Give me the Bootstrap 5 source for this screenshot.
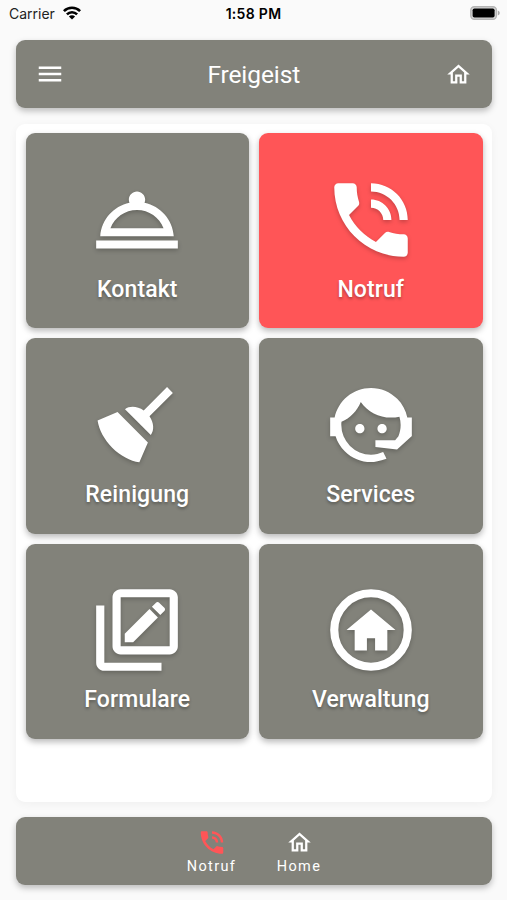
<!DOCTYPE html>
<html lang="de">
<head>
<meta charset="utf-8">
<meta name="viewport" content="width=device-width, initial-scale=1">
<title>Freigeist</title>
<link href="https://cdn.jsdelivr.net/npm/bootstrap@5.3.0/dist/css/bootstrap.min.css" rel="stylesheet">
<style>
  body { background: #fafafa; font-family: Roboto, "Liberation Sans", sans-serif; overflow: hidden; }
  .screen { height: 900px; padding: 0 15px 15px 15.5px; }
  .status { height: 40px; margin: 0 -8px 0 -6.5px; padding-bottom: 14px; font-family: Inter, sans-serif; font-size: 14px; color: #222; }
  .status .clock { font-weight: 600; color: #000; letter-spacing: .3px; margin-left: -2px; }
  .status .side { flex: 1 1 0; }
  .bar { height: 68px; background: #82827a; border-radius: 9px; color: #fff; box-shadow: 0 3px 6px rgba(0,0,0,.25); }
  .bar h1 { font-size: 24.5px; font-weight: 400; letter-spacing: -.1px; padding: 2px 2px 0 0; }
  .menu-icon { margin-left: 3px; }
  .panel { height: 678px; margin: 16px 0 15px; padding: 9px 9.5px 9px 10px; background: #fff; border-radius: 9px; box-shadow: 0 2px 8px rgba(0,0,0,.045); }
  .tiles { display: grid; grid-template-columns: 1fr 1fr; grid-auto-rows: 195.3px; gap: 10px; }
  .tile { background: #82827a; border-radius: 9px; color: #fff; text-decoration: none; padding-top: 37.5px; box-shadow: 0 3px 6px rgba(0,0,0,.28); }
  .tile.alarm { background: #ff5557; }
  .tile svg { width: 98px; height: 98px; filter: drop-shadow(0 2px 2px rgba(0,0,0,.22)); }
  .tile span { font-size: 23px; font-weight: 500; line-height: 30px; margin-top: 6px; letter-spacing: .1px; text-shadow: 0 2px 3px rgba(0,0,0,.3); }
  svg { fill: currentColor; display: block; flex: none; }
  .tab-strip { padding: 7px 0 0 3px; }
  .tab { color: #fff; text-decoration: none; font-size: 14.5px; line-height: 18px; letter-spacing: 1.35px; width: 87.5px; }
  .tab svg { height: 30px; }
  .hot { color: #ff5557; }
</style>
<script src="https://cdn.jsdelivr.net/npm/bootstrap@5.3.0/dist/js/bootstrap.bundle.min.js"></script>
</head>
<body>
<svg class="d-none" aria-hidden="true">
  <symbol id="home" viewBox="0 0 24 24"><path d="M12 5.69l5 4.5V18h-2v-6H9v6H7v-7.81l5-4.5M12 3L2 12h3v8h6v-6h2v6h6v-8h3L12 3z"/></symbol>
  <symbol id="phone" viewBox="0 0 24 24"><path d="M19 12h2c0-4.97-4.03-9-9-9v2c3.87 0 7 3.13 7 7zm-4 0h2c0-2.76-2.24-5-5-5v2c1.66 0 3 1.34 3 3zm5 3.5c-1.25 0-2.45-.2-3.57-.57-.35-.11-.74-.03-1.02.24l-2.2 2.2c-2.83-1.44-5.15-3.75-6.59-6.58l2.2-2.21c.28-.27.36-.66.25-1.01C8.7 6.45 8.5 5.25 8.5 4c0-.55-.45-1-1-1H4c-.55 0-1 .45-1 1 0 9.39 7.61 17 17 17 .55 0 1-.45 1-1v-3.5c0-.55-.45-1-1-1z"/></symbol>
</svg>
<div class="screen d-flex flex-column">
  <div class="status d-flex align-items-center">
    <div class="side d-flex align-items-center"><span>Carrier</span>
      <svg class="ms-2" width="18" height="14" viewBox="0 0 18 14"><g fill="none" stroke="#000" stroke-width="2.6"><path d="M.9 5.1a11.5 11.5 0 0 1 16.2 0M3.9 8.3a7.2 7.2 0 0 1 10.2 0"/></g><path d="M9 13.6 5.9 10.5a4.4 4.4 0 0 1 6.2 0z" fill="#000"/></svg>
    </div>
    <span class="clock">1:58 PM</span>
    <div class="side d-flex justify-content-end">
      <svg width="30" height="14" viewBox="0 0 30 14"><rect x=".8" y=".8" width="25.6" height="12.4" rx="3.5" fill="#d8d8d8" stroke="#b4b4b4" stroke-width="1.4"/><rect x="2.6" y="2.4" width="22" height="9.2" rx="1.8" fill="#000"/><path d="M27.8 4.6q2 .8 2 2.4t-2 2.4z" fill="#a9a9a9"/></svg>
    </div>
  </div>
  <header class="bar d-flex align-items-center justify-content-between px-3">
    <svg class="menu-icon" width="30" height="30" viewBox="0 0 24 24"><path d="M3 18h18v-2H3v2zm0-5h18v-2H3v2zm0-7v2h18V6H3z"/></svg>
    <h1 class="m-0">Freigeist</h1>
    <svg class="me-1" width="27" height="27"><use href="#home"/></svg>
  </header>
  <main class="panel">
    <div class="tiles">
      <a class="tile d-flex flex-column align-items-center" href="#"><svg viewBox="0 0 24 24"><path d="M2 17h20v2H2v-2zm11.84-9.21c.1-.24.16-.51.16-.79 0-1.1-.9-2-2-2s-2 .9-2 2c0 .28.06.55.16.79C6.25 8.6 3.27 11.93 3 16h18c-.27-4.07-3.25-7.4-7.16-8.21zM12 9.58c2.95 0 5.47 1.83 6.5 4.41h-13c1.03-2.58 3.55-4.41 6.5-4.41z"/></svg><span>Kontakt</span></a>
      <a class="tile alarm d-flex flex-column align-items-center" href="#"><svg><use href="#phone"/></svg><span>Notruf</span></a>
      <a class="tile d-flex flex-column align-items-center" href="#"><svg viewBox="0 0 24 24"><path d="M19.36,2.72L20.78,4.14L15.06,9.85C16.13,11.39 16.28,13.24 15.38,14.44L9.06,8.12C10.26,7.22 12.11,7.37 13.65,8.44L19.36,2.72M5.93,17.57C3.92,15.56 2.69,13.16 2.35,10.92L7.23,8.83L14.67,16.27L12.58,21.15C10.34,20.81 7.94,19.58 5.93,17.57Z"/></svg><span>Reinigung</span></a>
      <a class="tile d-flex flex-column align-items-center" href="#"><svg viewBox="0 0 24 24"><path d="M18.72,14.76C19.07,13.91 19.26,13 19.26,12C19.26,11.28 19.15,10.59 18.96,9.95C18.31,10.1 17.63,10.18 16.92,10.18C13.86,10.18 11.15,8.67 9.5,6.34C8.61,8.5 6.91,10.26 4.77,11.22C4.73,11.47 4.73,11.74 4.73,12A7.27,7.27 0 0,0 12,19.27C13.05,19.27 14.06,19.04 14.97,18.63C15.54,19.72 15.8,20.26 15.78,20.26C14.14,20.81 12.87,21.08 12,21.08C9.58,21.08 7.27,20.13 5.57,18.42C4.53,17.38 3.76,16.11 3.33,14.73H2V10.18H3.09C3.93,6.04 7.6,2.92 12,2.92C14.4,2.92 16.71,3.87 18.42,5.58C19.69,6.84 20.54,8.45 20.89,10.18H22V14.73H21.94L18.38,18L13.08,17.4V15.73H17.91L18.72,14.76M9.27,11.77C9.9,11.77 10.4,12.28 10.4,12.91C10.4,13.54 9.9,14.04 9.27,14.04C8.64,14.04 8.13,13.54 8.13,12.91C8.13,12.28 8.64,11.77 9.27,11.77M14.72,11.77C15.35,11.77 15.85,12.28 15.85,12.91C15.85,13.54 15.35,14.04 14.72,14.04C14.09,14.04 13.58,13.54 13.58,12.91C13.58,12.28 14.09,11.77 14.72,11.77Z"/></svg><span>Services</span></a>
      <a class="tile d-flex flex-column align-items-center" href="#"><svg viewBox="0 0 24 24"><path d="M4 6H2v14c0 1.1.9 2 2 2h14v-2H4V6zM20 2H8c-1.1 0-2 .9-2 2v12c0 1.1.9 2 2 2h12c1.1 0 2-.9 2-2V4c0-1.1-.9-2-2-2zm0 14H8V4h12v12z"/><path d="M18.7 7.35l-1 1-2.05-2.05 1-1c.21-.22.56-.22.77 0l1.28 1.28c.22.21.22.56 0 .77M9 12.94l6.06-6.06 2.06 2.06L11.06 15H9z"/></svg><span>Formulare</span></a>
      <a class="tile d-flex flex-column align-items-center" href="#"><svg viewBox="0 0 24 24"><circle cx="12" cy="12" r="9" fill="none" stroke="currentColor" stroke-width="2"/><path d="M12 7l6 5h-2v5h-3v-3h-2v3H8v-5H6z"/></svg><span>Verwaltung</span></a>
    </div>
  </main>
  <footer class="bar tab-strip d-flex justify-content-center">
    <a class="tab d-flex flex-column align-items-center pt-1" href="#"><svg class="hot" width="30"><use href="#phone" width="30" height="30" y="-.5"/></svg><span>Notruf</span></a>
    <a class="tab d-flex flex-column align-items-center pt-1" href="#"><svg width="27"><use href="#home" width="27" height="27" y="1"/></svg><span>Home</span></a>
  </footer>
</div>
</body>
</html>
